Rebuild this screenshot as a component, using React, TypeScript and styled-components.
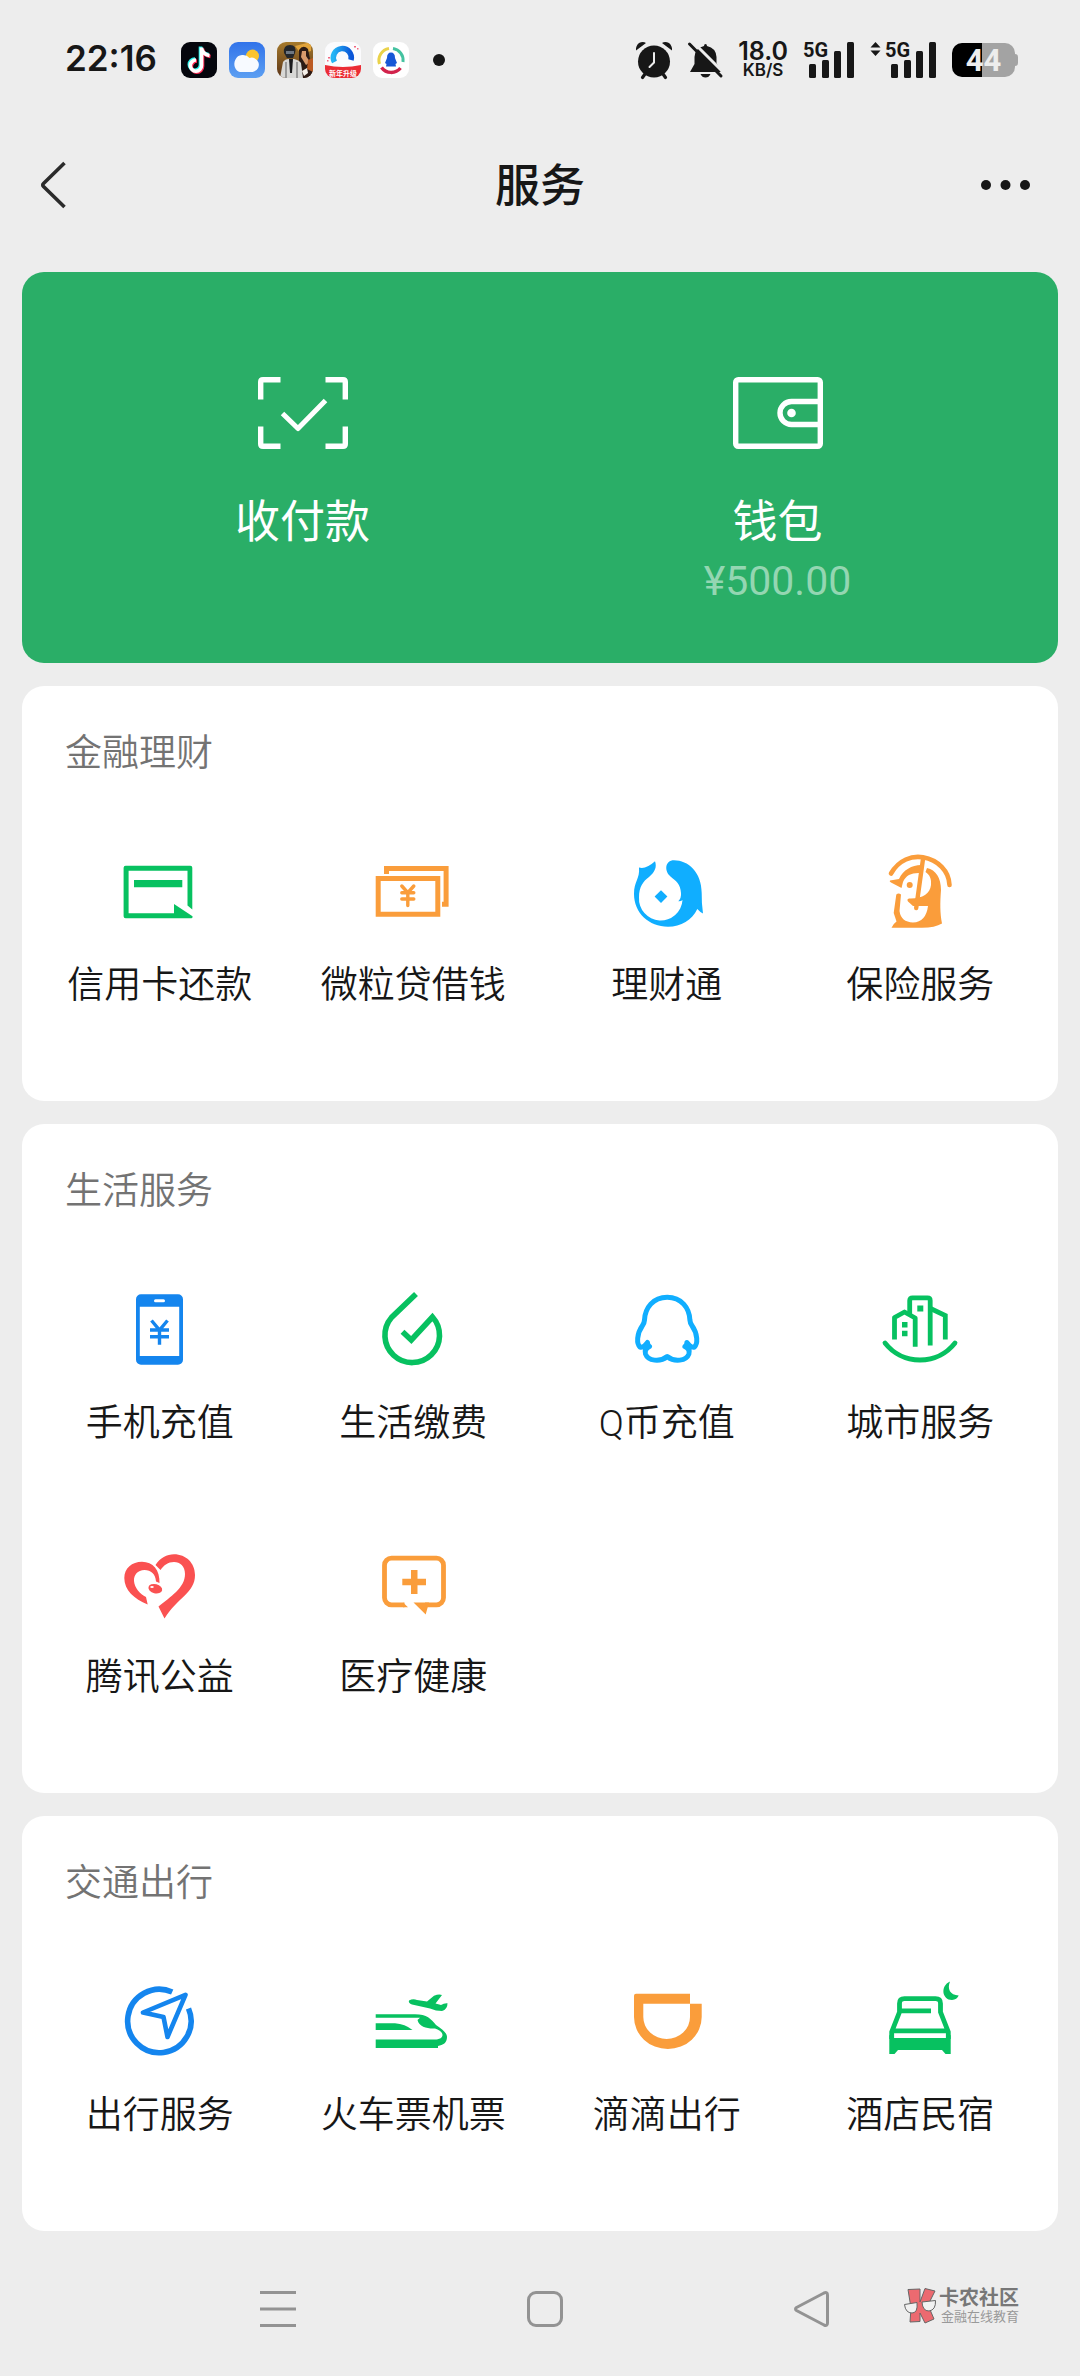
import React from "react";
import styled, { createGlobalStyle } from "styled-components";

const GREEN = "#07C160";
const ORANGE = "#FA9D3B";
const BLUE = "#1485EE";
const SKY = "#10AEFF";
const RED = "#FA5151";
const INK = "#171717";

const GlobalStyle = createGlobalStyle`
  *, *::before, *::after { box-sizing: border-box; }
  body {
    margin: 0;
    background: #ededed;
    color: ${INK};
    font-family: Roboto, "Noto Sans CJK SC", sans-serif;
  }
  button {
    border: 0;
    padding: 0;
    background: none;
    color: inherit;
    font: inherit;
    cursor: pointer;
  }
  ul { list-style: none; margin: 0; padding: 0; }
  h1, h2 { margin: 0; }
  svg { display: block; overflow: visible; flex: none; }
`;

const Page = styled.div`
  min-height: 100vh;
  display: flex;
  flex-direction: column;
`;

/* ---------- status bar ---------- */

const StatusBar = styled.div`
  display: flex;
  justify-content: space-between;
  align-items: center;
  height: 120px;
  padding: 0 62px 0 65px;
`;

const StatusGroup = styled.div<{ $gap: number }>`
  display: flex;
  align-items: center;
  gap: ${(p) => p.$gap}px;
`;

const Clock = styled.span`
  padding-bottom: 4px;
  margin-right: 12px;
  font: 600 35px/40px Inter, sans-serif;
`;

const NotificationDot = styled.span`
  width: 12px;
  height: 12px;
  margin-left: 12px;
  border-radius: 50%;
  background: ${INK};
`;

const Speed = styled.div`
  display: flex;
  flex-direction: column;
  align-items: center;
  font-family: Inter, sans-serif;
  font-weight: 600;
`;

const SpeedValue = styled.span`
  font-size: 25px;
  line-height: 20px;
`;

const SpeedUnit = styled.span`
  font-size: 17px;
  line-height: 18px;
`;

const Battery = styled.div`
  display: flex;
  align-items: center;
`;

const BatteryBody = styled.div`
  width: 63px;
  height: 34px;
  border-radius: 10px;
  background: linear-gradient(to right, #000 48%, #a3a3a3 48%);
  color: #ededed;
  font: 700 31px/36px Roboto, sans-serif;
  text-align: center;
`;

const BatteryTip = styled.div`
  width: 3px;
  height: 12px;
  border-radius: 0 3px 3px 0;
  background: #a3a3a3;
`;

/* ---------- title bar ---------- */

const TitleBar = styled.header`
  display: grid;
  grid-template-columns: 1fr auto 1fr;
  align-items: center;
  height: 130px;
  padding: 0 36px;
  margin-bottom: 22px;
`;

const Title = styled.h1`
  padding-top: 4px;
  font-size: 45px;
  line-height: 60px;
  font-weight: 500;
`;

const BarButton = styled.button<{ $end?: boolean }>`
  justify-self: ${(p) => (p.$end ? "end" : "start")};
`;

/* ---------- cards ---------- */

const Main = styled.main`
  display: flex;
  flex-direction: column;
  gap: 23px;
  padding: 0 22px;
`;

const PayCard = styled.section`
  display: grid;
  grid-template-columns: 1fr 1fr;
  padding: 105px 43px 54px;
  border-radius: 22px;
  background: #2aae67;
  color: #fff;
`;

const PayButton = styled.button`
  display: flex;
  flex-direction: column;
  align-items: center;
`;

const PayLabel = styled.span`
  margin-top: 44px;
  font-size: 45px;
  line-height: 60px;
`;

const Balance = styled.span`
  font-size: 41px;
  line-height: 56px;
  color: #94d6b2;
`;

const Card = styled.section`
  padding: 46px 11px 36px;
  border-radius: 22px;
  background: #fff;
`;

const CardTitle = styled.h2`
  margin: 0 32px 36px;
  color: #737373;
  font-size: 37px;
  line-height: 44px;
  font-weight: 350;
`;

const ServiceGrid = styled.ul`
  display: grid;
  grid-template-columns: repeat(4, 1fr);
  row-gap: 1px;
`;

const ServiceButton = styled.button`
  display: flex;
  flex-direction: column;
  align-items: center;
  justify-content: flex-start;
  gap: 29px;
  width: 100%;
  height: 253px;
  padding-top: 41px;
`;

const ServiceLabel = styled.span`
  font-size: 37px;
  line-height: 48px;
  font-weight: 350;
  white-space: nowrap;
`;

/* ---------- system navigation ---------- */

const NavBar = styled.nav`
  position: relative;
  display: flex;
  height: 144px;
  padding: 60px 135px 48px 144px;
`;

const NavButton = styled.button`
  flex: 1;
  display: flex;
  justify-content: center;
`;

const Watermark = styled.div`
  position: absolute;
  right: 61px;
  top: 56px;
  display: flex;
  align-items: center;
  gap: 2px;
`;

const WatermarkText = styled.div`
  display: flex;
  flex-direction: column;
  align-items: flex-end;
  color: #777;
`;

const WatermarkName = styled.span`
  font-size: 20px;
  line-height: 22px;
  font-weight: 700;
`;

const WatermarkTag = styled.span`
  font-size: 13px;
  line-height: 16px;
  color: #999;
`;

/* ---------- drawings ---------- */

const Icon = ({ children, color }: { children: React.ReactNode; color: string }) => (
  <svg width="80" height="80" viewBox="0 0 80 80" color={color} fill="none" aria-hidden="true">
    {children}
  </svg>
);

const CreditCard = () => (
  <Icon color={GREEN}>
    <path
      fill="currentColor"
      d="M5.6 12.7h64.7a2 2 0 0 1 2 2V56.5L67.5 52.5V17.7H8.6V60.3H54V51L72.5 63.2Q73 65.3 70.5 65.3H5.6a2 2 0 0 1-2-2V14.7a2 2 0 0 1 2-2z"
    />
    <path fill="currentColor" d="M14 27h48.3v7.3H14z" />
  </Icon>
);

const Banknotes = () => (
  <Icon color={ORANGE}>
    <g stroke="currentColor" strokeWidth="5">
      <path d="M5.2 25.5h59.6v35.7H5.2z" />
      <path d="M13.5 21V15.5H73.1V51.2H69" />
    </g>
    <path
      stroke="currentColor"
      strokeWidth="3.4"
      strokeLinecap="round"
      d="M28.8 33l6 6.7 6-6.7M34.8 39.7V52.5M28.8 39.7h12M28.8 46h12"
    />
  </Icon>
);

const Fish = () => (
  <Icon color={SKY}>
    <path
      fill="currentColor"
      d="M12 14.5Q19 16.500 28 8.300C30 14 28 19 22 24C16 28.500 12 34 12 44.300A21.700 21.700 0 0 0 55.500 47Q54 48.500 51.300 48.300Q54.500 45 54 40C53.500 31 49 28 43.500 23.500C37 18 38 7.300 47 7.300C61 7.300 74.700 19 74.700 40Q74.500 50 76 60.500Q73.500 59.500 70.300 56C65 67 54 73.700 41 73.700C22 73.700 7 60 7 41C7 28 13 26 12 14.500z"
    />
    <path fill="currentColor" d="M34 37.2l6.4 6.4-6.4 6.4-6.4-6.4z" />
  </Icon>
);

const Umbrella = () => (
  <Icon color={ORANGE}>
    <path stroke="currentColor" strokeWidth="4.6" strokeLinecap="round" d="M11 20.5C19 6.5 32 2.5 43 4.3C58 7 69 18 69.500 32" />
    <path stroke="currentColor" strokeWidth="4.4" strokeLinecap="round" d="M43 6L36.2 55" />
    <path
      fill="currentColor"
      d="M47 15C56 17 61 25 61 37C60 50 60 60 62 70.5Q55 74.7 42 74.7H11.5Q13 71 16.5 68.5L13.7 60L16.3 41.5Q18.5 39.5 21 41.5L19.5 58Q21 69 33 69.500Q46 69 48 53H33L28 48.5Q26.5 46 29 45.5C42 46 50 41 51 32C51.5 26 50 22 45.5 19z"
    />
    <path fill="currentColor" d="M10 27.5L19 26C23 17 32 12 41 12L40.5 20C32 19.5 26 22 23 29L21.5 35L11 29.5Q9 28.5 10 27.5z" />
    <circle cx="29.7" cy="32" r="3" fill="currentColor" />
  </Icon>
);

const PhoneTopUp = () => (
  <Icon color={BLUE}>
    <path
      fill="currentColor"
      fillRule="evenodd"
      d="M21 3.3H58a5 5 0 0 1 5 5V68.7a5 5 0 0 1-5 5H21a5 5 0 0 1-5-5V8.3a5 5 0 0 1 5-5zM19.8 15.700V65H59.2V15.7zM35.5 8.3a1.5 1.5 0 0 0 0 3h8a1.5 1.5 0 0 0 0-3z"
    />
    <path
      stroke="currentColor"
      strokeWidth="3.4"
      d="M31.5 29.5l8 9.5 8-9.5M39.5 39V53.7M30 39h19M30 45.7h19"
    />
  </Icon>
);

const WaterDrop = () => (
  <Icon color={GREEN}>
    <path stroke="currentColor" strokeWidth="5.6" d="M43 3L18.5 26.5A27.3 27.3 0 1 0 59.5 26L38.3 49L29.5 40.7" />
  </Icon>
);

const Penguin = () => (
  <Icon color={SKY}>
    <path
      stroke="currentColor"
      strokeWidth="5"
      strokeLinejoin="round"
      d="M40.2 6.3C26 6.3 18 17 17.5 29Q17.3 32 15.5 34.5C9.5 43 9.5 53 13 56Q16.5 57 20.5 51.5Q20.5 54 22.5 55.5Q17 58 18.5 63C21 70 33 71.5 40.2 65.5C47.4 71.5 59.4 70 61.9 63Q63.4 58 57.9 55.5Q59.9 54 59.9 51.5Q63.9 57 67.4 56C70.9 53 70.9 43 64.9 34.5Q63.1 32 62.9 29C62.4 17 54.4 6.3 40.2 6.3z"
    />
  </Icon>
);

const City = () => (
  <Icon color={GREEN}>
    <g stroke="currentColor" strokeWidth="4.8">
      <path d="M14.5 48.5V26.5L24.5 21L35.2 27V55.7" strokeLinejoin="round" />
      <path d="M29.7 23V9.5Q29.7 6.8 32.5 6.8H47.5Q50.2 6.8 50.2 9.5V54.5" />
      <path d="M50.5 17.5L65.3 24.5V48.5" />
      <path d="M5 52A44.5 44.5 0 0 0 75 52" strokeLinecap="round" />
    </g>
    <path fill="currentColor" d="M37.3 14.5h6v6h-6zM22 31h5.5v5.5H22zM22 39.7h5.5v5.5H22z" />
  </Icon>
);

const Heart = () => (
  <Icon color={RED}>
    <path
      fill="currentColor"
      d="M27.7 59.5C14 54 4.3 45 4.3 33C4.3 23 12 16.7 22 16.7C33 16.7 40 25 39.5 38L36 36.5C35.5 29 31 25 24.5 25C17.5 25 13.7 30 14 36C14.5 43 20 49 26 52z"
    />
    <ellipse cx="35.3" cy="43.7" rx="7" ry="4.6" transform="rotate(14 35.3 43.7)" fill="currentColor" />
    <ellipse cx="32" cy="42" rx="1.8" ry="1" fill="#fff" />
    <path
      fill="currentColor"
      d="M35.5 20C40 13 47 9.3 54 9.3C66 9.3 75 18 75 30C75 48 58 52 44.5 73.5L38.5 61.5C50 52 65 43 65 29C65 21 60 17 54 17C48 17 44 20 40.5 25z"
    />
  </Icon>
);

const Medical = () => (
  <Icon color={ORANGE}>
    <path
      stroke="currentColor"
      strokeWidth="4.8"
      d="M31.5 59.8H18.5a7 7 0 0 1-7-7V20.2a7 7 0 0 1 7-7H63.5a7 7 0 0 1 7 7V52.8a7 7 0 0 1-7 7H52"
    />
    <path fill="currentColor" d="M30 57.4L35 62.2H30zM40.5 57.4H56L52.7 69.5zM38 25h6.5v8.7H53v6.600h-8.5V49H38v-8.7h-8.7v-6.6H38z" />
  </Icon>
);

const Compass = () => (
  <Icon color={BLUE}>
    <path stroke="currentColor" strokeWidth="5.6" d="M52.2 9A31.7 31.7 0 1 0 68.5 25.5" />
    <path stroke="currentColor" strokeWidth="4.6" strokeLinejoin="round" d="M65.5 11.8L23 29.5L43.5 34L47.5 54z" />
  </Icon>
);

const TrainPlane = () => (
  <Icon color={GREEN}>
    <path
      fill="currentColor"
      d="M2.7 31.3H42C54 31.3 58 36 63 42C70 47 74 50 74 54C74 60 70 62 65 63V65H2.7V56.5H62C66 56.5 69.5 55 69.5 52C69.5 49 66 47 62 45.5C55 46 46 44 44.5 37L47 34.7H2.7z"
    />
    <path fill="currentColor" d="M2.7 40.3H22Q32 41 39.5 47H2.7z" />
    <path
      fill="currentColor"
      d="M36 17.5Q40 15.5 44 17L54 18.5L61 12.8Q66 10.5 69 12L62.5 20.5L68 22Q71 20 74.5 20.3Q74.5 26.5 69 28Q63 28 57 25.5L39 21.5Q35 20 36 17.5z"
    />
  </Icon>
);

const Didi = () => (
  <Icon color={ORANGE}>
    <path
      fill="currentColor"
      fillRule="evenodd"
      d="M9 10.7H63V20.7H74.7V34A33.85 32 0 0 1 7 34V12.7a2 2 0 0 1 2-2zM16.3 20.7V34A23.35 22 0 0 0 63 34V20.7z"
    />
  </Icon>
);

const Bed = () => (
  <Icon color={GREEN}>
    <path
      stroke="currentColor"
      strokeWidth="4.8"
      d="M11.7 56V49L19.5 29V20.5Q19.5 15.7 24.5 15.7H55.5Q60.5 15.7 60.5 20.5V29L68.3 49V56M19.5 27.8H51M12 47.8H68"
    />
    <path fill="currentColor" d="M9.3 52L14 55H66L70.7 52V71H65.5L62 67H18L14.5 71H9.3z" />
    <path fill="currentColor" d="M70-1.5C60 3 62 17 72 17Q77 16.5 78.7 12.5C70 12 67 6 70-1.5z" />
  </Icon>
);

const ScanPay = () => (
  <svg width="90" height="72" viewBox="0 0 90 72" fill="none" stroke="#fff" strokeWidth="5.4" aria-hidden="true">
    <path d="M22.5 2.7H5Q2.7 2.7 2.7 5V22.5M67.5 2.7H85Q87.3 2.7 87.3 5V22.5M22.5 69.3H5Q2.7 69.3 2.7 67V49.5M67.5 69.3H85Q87.3 69.3 87.3 67V49.5" />
    <path d="M24.5 36.5L40 51.5L67.5 23.5" strokeWidth="5" strokeLinejoin="round" />
  </svg>
);

const Wallet = () => (
  <svg width="90" height="72" viewBox="0 0 90 72" fill="none" stroke="#fff" strokeWidth="5.4" aria-hidden="true">
    <rect x="2.7" y="2.7" width="84.6" height="66.6" rx="2.5" />
    <path d="M87 24.5H58.5a11.5 11.5 0 0 0 0 23H87" />
    <circle cx="58.5" cy="36" r="4.3" fill="#fff" stroke="none" />
  </svg>
);

const TikTokApp = () => (
  <svg width="36" height="36" viewBox="0 0 36 36" aria-hidden="true">
    <rect width="36" height="36" rx="9" fill="#05060d" />
    {[
      { c: "#25f4ee", x: -1, y: -1 },
      { c: "#fe2c55", x: 1, y: 1 },
      { c: "#fff", x: 0, y: 0 },
    ].map((l) => (
      <path
        key={l.c}
        transform={`translate(${l.x} ${l.y})`}
        fill="none"
        stroke={l.c}
        strokeWidth="3.6"
        d="M20.5 5.5V23.5A5.600 5.600 0 1 1 15 18M20.5 6Q21.5 12.5 28.5 13.5"
      />
    ))}
  </svg>
);

const WeatherApp = () => (
  <svg width="36" height="36" viewBox="0 0 36 36" aria-hidden="true">
    <defs>
      <linearGradient id="sky" x2="0" y2="1">
        <stop stopColor="#3173ea" />
        <stop offset="1" stopColor="#5c9ff2" />
      </linearGradient>
    </defs>
    <rect width="36" height="36" rx="9" fill="url(#sky)" />
    <circle cx="23.5" cy="14" r="6.5" fill="#fbc42c" />
    <path fill="#f7faff" d="M11 30A6.5 8 0 0 1 6.5 17.500A8 7 0 0 1 20.5 16A7 7 0 0 1 25 29.5Q24 30 22 30z" />
  </svg>
);

const GameApp = () => (
  <svg width="36" height="36" viewBox="0 0 36 36" aria-hidden="true">
    <defs>
      <clipPath id="game">
        <rect width="36" height="36" rx="9" />
      </clipPath>
      <linearGradient id="dusk" x2="0" y2="1">
        <stop stopColor="#a67a2c" />
        <stop offset="1" stopColor="#5a3418" />
      </linearGradient>
    </defs>
    <g clipPath="url(#game)">
      <rect width="36" height="36" fill="url(#dusk)" />
      <path fill="#e1a33a" d="M18 4L34 0V9L24 12z" />
      <path fill="#2c1a14" d="M22 8Q26 2 31 7L34 22L36 36H22z" />
      <path fill="#d89a6c" d="M25 9h4v5l4 6-4 3-5-8z" />
      <path fill="#bb5a22" d="M31 18l5-2v14l-6-3z" />
      <path fill="#d8d8d6" d="M3 36L6 20Q8 17 12 17H17Q22 18 24 21L26 36z" />
      <path stroke="#5a5a5c" strokeWidth="1" d="M9 20v16M20 20v16" />
      <path fill="#1b1b1d" d="M12 17h4l-1 14h-2z" />
      <path fill="#23262b" d="M7 11Q6 3 13 3T18 11L16 16H10z" />
      <path fill="#6d7681" d="M9 9h8v3H9z" />
      <path fill="#f5efe8" d="M25 29l5-3 1 5-4 3z" />
    </g>
  </svg>
);

const BrowserApp = () => (
  <svg width="36" height="36" viewBox="0 0 36 36" aria-hidden="true">
    <defs>
      <clipPath id="browser">
        <rect width="36" height="36" rx="9" />
      </clipPath>
      <linearGradient id="swirl">
        <stop stopColor="#25b6f5" />
        <stop offset="1" stopColor="#0a55d8" />
      </linearGradient>
    </defs>
    <g clipPath="url(#browser)">
      <rect width="36" height="36" fill="#fbfbfd" />
      <path fill="none" stroke="url(#swirl)" strokeWidth="5.5" d="M9.5 20A9 9 0 1 1 26 18" />
      <path fill="#eb2c35" d="M0 23Q18 27 36 23V36H0z" />
      <text x="18" y="34" textAnchor="middle" fontSize="7" fontWeight="700" fill="#fff">
        新年升级
      </text>
      <path fill="#f2667f" d="M29 4h2v1.5h-2zM32 6h1.5v1.5H32zM3 15h2v1.5H3zM2 18h1.5v1.5H2z" />
    </g>
  </svg>
);

const TencentNewsApp = () => (
  <svg width="36" height="36" viewBox="0 0 36 36" fill="none" aria-hidden="true">
    <rect width="36" height="36" rx="9" fill="#fff" />
    <path stroke="#ead24a" strokeWidth="3" d="M6.5 22A12 12 0 0 1 16 6.5" />
    <path stroke="#44c2a0" strokeWidth="3" d="M20 6.5A12 12 0 0 1 30 20" />
    <path stroke="#d2234c" strokeWidth="3.4" d="M8.5 25.5A12 12 0 0 0 27.5 26" />
    <path fill="#1857d6" d="M18 10.5q4 0 4 5.5l2 5-1.5 1 .5 2.5H13l.5-2.5-1.5-1 2-5q0-5.5 4-5.5z" />
  </svg>
);

const Alarm = () => (
  <svg width="38" height="38" viewBox="0 0 38 38" fill={INK} aria-hidden="true">
    <path d="M1 9.5Q.5 5 4 2Q8 0 11 2zM37 9.5Q37.5 5 34 2Q30 0 27 2z" />
    <circle cx="19" cy="20.5" r="16" />
    <path stroke={INK} strokeWidth="3.2" strokeLinecap="round" d="M10 33l-2.5 3.5M28 33l2.5 3.5" />
    <path d="M19 12v9.5l-4.5 4.5" fill="none" stroke="#ededed" strokeWidth="2" strokeLinecap="round" />
  </svg>
);

const Muted = () => (
  <svg width="35" height="35" viewBox="0 0 35 35" fill={INK} aria-hidden="true">
    <path d="M17.5 1Q19 1 19 3Q28 5 28.5 14V20L33 29H2L6.5 21V14Q7 5 16 3Q16 1 17.5 1zM12.5 31h10q-1.5 3.5-5 3.5t-5-3.5z" />
    <path stroke="#ededed" strokeWidth="3" d="M4 -2L37 31" />
    <path stroke={INK} strokeWidth="3" strokeLinecap="round" d="M1.5 1L33 33" />
  </svg>
);

const Signal = ({ data }: { data?: boolean }) => (
  <svg width={data ? 67 : 52} height="37" viewBox={data ? "-15 0 67 37" : "0 0 52 37"} fill={INK} role="img">
    {data && <path d="M-9.5 0l5 5.5h-10zM-9.5 14l5-5.500h-10z" />}
    <text x="0" y="15" fontFamily="Roboto, sans-serif" fontWeight="700" fontSize="20">
      5G
    </text>
    <rect x="6" y="22" width="7" height="14" rx="1.5" />
    <rect x="19" y="18" width="7" height="18" rx="1.5" />
    <rect x="31" y="9" width="7" height="27" rx="1.5" />
    <rect x="44" y="0" width="7" height="36" rx="1.5" />
  </svg>
);

const CommunityLogo = () => (
  <svg width="34" height="36" viewBox="0 0 34 36" aria-hidden="true">
    <g fill="#ec6a70" stroke="#666" strokeWidth="1">
      <path d="M5 1.5L17 1V14L22 .5L32 3L25 17L31 31L22 35L17 25V33.5L7 34L8 20z" />
    </g>
    <g fill="#f1f1f1" stroke="#666" strokeWidth="1">
      <path d="M1.5 16.5L14 14.500Q15 25 9 25Q2.5 25 1.5 16.5zM19 14L32.5 12.5Q33 22 26 23Q19.5 23 19 14z" />
    </g>
  </svg>
);

/* ---------- content ---------- */

type Service = { name: string; icon: React.ComponentType };

const sections: { title: string; services: Service[] }[] = [
  {
    title: "金融理财",
    services: [
      { name: "信用卡还款", icon: CreditCard },
      { name: "微粒贷借钱", icon: Banknotes },
      { name: "理财通", icon: Fish },
      { name: "保险服务", icon: Umbrella },
    ],
  },
  {
    title: "生活服务",
    services: [
      { name: "手机充值", icon: PhoneTopUp },
      { name: "生活缴费", icon: WaterDrop },
      { name: "Q币充值", icon: Penguin },
      { name: "城市服务", icon: City },
      { name: "腾讯公益", icon: Heart },
      { name: "医疗健康", icon: Medical },
    ],
  },
  {
    title: "交通出行",
    services: [
      { name: "出行服务", icon: Compass },
      { name: "火车票机票", icon: TrainPlane },
      { name: "滴滴出行", icon: Didi },
      { name: "酒店民宿", icon: Bed },
    ],
  },
];

export default function App() {
  return (
    <Page>
      <GlobalStyle />
      <StatusBar>
        <StatusGroup $gap={12}>
          <Clock>22:16</Clock>
          <TikTokApp />
          <WeatherApp />
          <GameApp />
          <BrowserApp />
          <TencentNewsApp />
          <NotificationDot />
        </StatusGroup>
        <StatusGroup $gap={15}>
          <Alarm />
          <Muted />
          <Speed>
            <SpeedValue>18.0</SpeedValue>
            <SpeedUnit>KB/S</SpeedUnit>
          </Speed>
          <Signal />
          <Signal data />
          <Battery>
            <BatteryBody>44</BatteryBody>
            <BatteryTip />
          </Battery>
        </StatusGroup>
      </StatusBar>

      <TitleBar>
        <BarButton aria-label="返回">
          <svg width="34" height="48" viewBox="0 0 34 48" fill="none" stroke="#2b2b2b" strokeWidth="3.6">
            <path d="M28.5 2L7.5 22.5Q6 24 7.5 25.500L28.5 46" />
          </svg>
        </BarButton>
        <Title>服务</Title>
        <BarButton $end aria-label="更多">
          <svg width="64" height="48" viewBox="0 0 64 48" fill={INK}>
            <circle cx="6" cy="24" r="5" />
            <circle cx="25.5" cy="24" r="5" />
            <circle cx="45" cy="24" r="5" />
          </svg>
        </BarButton>
      </TitleBar>

      <Main>
        <PayCard>
          <PayButton>
            <ScanPay />
            <PayLabel>收付款</PayLabel>
          </PayButton>
          <PayButton>
            <Wallet />
            <PayLabel>钱包</PayLabel>
            <Balance>¥500.00</Balance>
          </PayButton>
        </PayCard>

        {sections.map((section) => (
          <Card key={section.title}>
            <CardTitle>{section.title}</CardTitle>
            <ServiceGrid>
              {section.services.map(({ name, icon: ServiceIcon }) => (
                <li key={name}>
                  <ServiceButton>
                    <ServiceIcon />
                    <ServiceLabel>{name}</ServiceLabel>
                  </ServiceButton>
                </li>
              ))}
            </ServiceGrid>
          </Card>
        ))}
      </Main>

      <NavBar>
        <NavButton aria-label="最近任务">
          <svg width="36" height="36" viewBox="0 0 36 36" stroke="#939393" strokeWidth="3">
            <path d="M0 1.5h36M0 18h36M0 34.5h36" />
          </svg>
        </NavButton>
        <NavButton aria-label="主屏幕">
          <svg width="36" height="36" viewBox="0 0 36 36" fill="none" stroke="#939393" strokeWidth="3">
            <rect x="1.5" y="1.5" width="33" height="33" rx="7.5" />
          </svg>
        </NavButton>
        <NavButton aria-label="返回上一页">
          <svg width="36" height="36" viewBox="0 0 36 36" fill="none" stroke="#939393" strokeWidth="3">
            <path d="M2.5 16.5L30 2Q33.5 .5 33.5 4V32Q33.5 35.5 30 34L2.5 19.5Q.5 18 2.5 16.5z" />
          </svg>
        </NavButton>
        <Watermark>
          <CommunityLogo />
          <WatermarkText>
            <WatermarkName>卡农社区</WatermarkName>
            <WatermarkTag>金融在线教育</WatermarkTag>
          </WatermarkText>
        </Watermark>
      </NavBar>
    </Page>
  );
}
